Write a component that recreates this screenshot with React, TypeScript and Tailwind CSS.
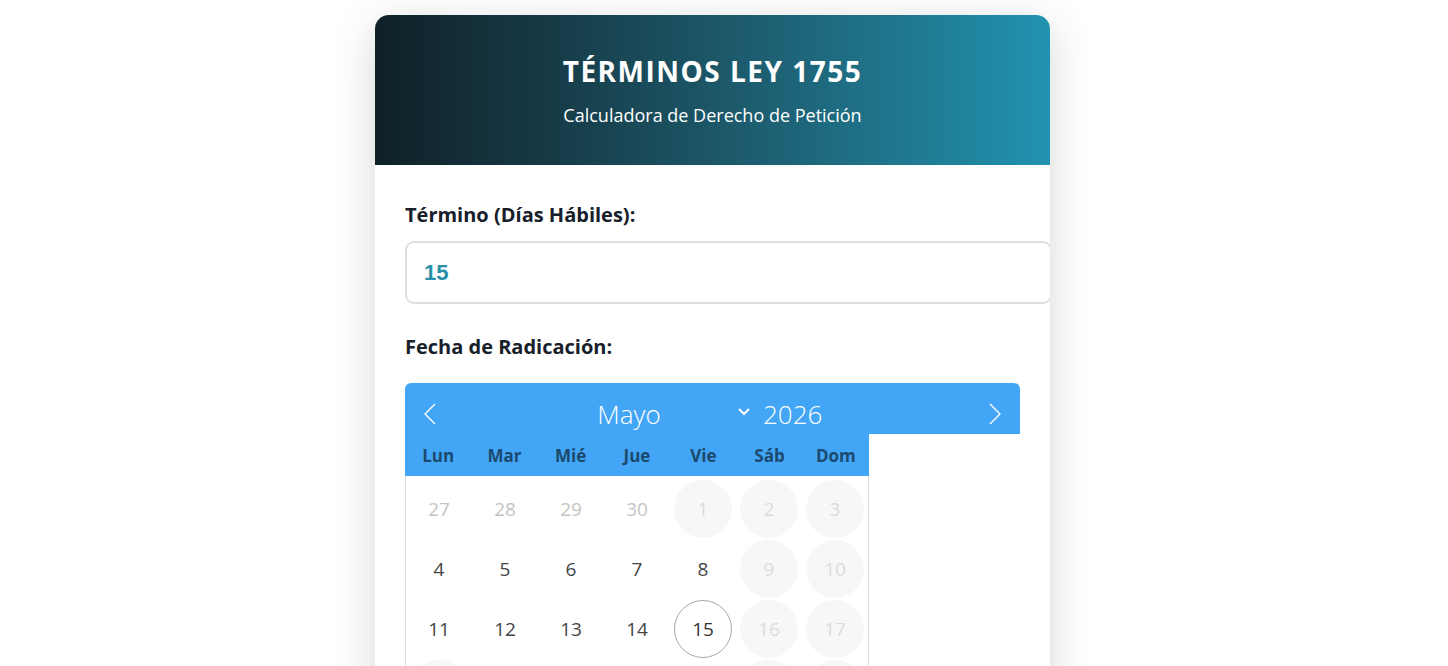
import { useState } from "react";

type Day = { n: number; outside?: boolean; off?: boolean };

const weekdays = ["Lun", "Mar", "Mié", "Jue", "Vie", "Sáb", "Dom"];

// festivos colombianos en mayo 2026
const holidays = [1, 18];

function buildMonth(): Day[][] {
  const days: Day[] = [27, 28, 29, 30].map((n) => ({ n, outside: true }));
  for (let n = 1; n <= 31; n++) {
    const col = days.length % 7;
    days.push({ n, off: col >= 5 || holidays.includes(n) });
  }
  const rows: Day[][] = [];
  for (let i = 0; i < days.length; i += 7) rows.push(days.slice(i, i + 7));
  return rows;
}

function Chevron({ dir }: { dir: "left" | "right" }) {
  return (
    <svg width="12" height="22" viewBox="0 0 12 22" fill="none">
      <polyline
        points={dir === "left" ? "11,1 1,11 11,21" : "1,1 11,11 1,21"}
        stroke="white"
        strokeWidth="1.4"
        strokeLinejoin="round"
      />
    </svg>
  );
}

export default function App() {
  const [term, setTerm] = useState("15");
  const [selected, setSelected] = useState(15);
  const rows = buildMonth();

  return (
    <div className="min-h-screen bg-white font-['Open_Sans','Noto_Sans',sans-serif]">
      <div className="w-[1425px] pt-[15px] flex justify-center">
        <div className="w-[675px] rounded-[14px] bg-white overflow-hidden shadow-[0_10px_45px_rgba(0,0,0,0.16)]">
          {/* Header */}
          <div className="h-[150px] bg-gradient-to-r from-[#0f2027] to-[#2193b0] flex flex-col items-center pt-[38px]">
            <h1 className="text-white font-bold text-[28px] leading-[36px] tracking-[1.5px]">
              TÉRMINOS LEY 1755
            </h1>
            <p className="text-white text-[18px] leading-[24px] mt-[14px]">
              Calculadora de Derecho de Petición
            </p>
          </div>

          <div className="px-[30px] pt-[35px] pb-[40px]">
            <label className="block text-[20px] leading-[30px] font-bold text-[#17202a]">
              Término (Días Hábiles):
            </label>
            <input
              value={term}
              onChange={(e) => setTerm(e.target.value)}
              className="mt-[11px] block w-[647px] h-[63px] border-2 border-[#dedede] rounded-[9px] px-[17px] text-[22px] font-bold text-[#2a8fa8] font-['Liberation_Sans',sans-serif] outline-none"
            />

            <label className="block mt-[28px] text-[20px] leading-[30px] font-bold text-[#17202a]">
              Fecha de Radicación:
            </label>

            {/* Calendar */}
            <div className="mt-[21px] w-[615px]">
              <div className="h-[51px] pt-[10px] bg-[#42a5f5] rounded-t-[6px] flex items-center text-white">
                <button className="w-[50px] h-full flex items-center justify-center">
                  <Chevron dir="left" />
                </button>
                <div className="ml-[74px] w-[200px] text-center text-[26px] font-light leading-[36px]">
                  Mayo
                </div>
                <svg width="14" height="10" viewBox="0 0 14 10" className="ml-[8px] mt-[-4px]" fill="none">
                  <polyline points="2,2 7,7 12,2" stroke="white" strokeWidth="2" />
                </svg>
                <div className="ml-[12px] text-[26px] font-light leading-[36px]">2026</div>
                <div className="flex-1" />
                <button className="w-[50px] h-full flex items-center justify-center">
                  <Chevron dir="right" />
                </button>
              </div>
              <div className="w-[464px]">
                <div className="h-[42px] pt-[2px] bg-[#42a5f5] grid grid-cols-7 items-center">
                  {weekdays.map((w) => (
                    <div key={w} className="text-center text-[17px] font-bold text-[#1b4a6e]">
                      {w}
                    </div>
                  ))}
                </div>
                <div className="border-x border-[#dddddd] pt-[3px] pb-[6px]">
                  {rows.map((row, i) => (
                    <div key={i} className="grid grid-cols-7 h-[60px]">
                      {row.map((d) => {
                        const isSel = !d.outside && d.n === selected;
                        let cls = "text-[#444444]";
                        if (d.outside) cls = "text-[#c4c4c4]";
                        else if (d.off) cls = "bg-[#f7f7f7] text-[#dcdcdc]";
                        if (isSel) cls = "text-[#333333] border border-[#a8a8a8]";
                        return (
                          <div key={`${i}-${d.n}`} className="flex items-center justify-center">
                            <button
                              onClick={() => !d.off && !d.outside && setSelected(d.n)}
                              className={`w-[58px] h-[58px] rounded-full flex items-center justify-center text-[19px] ${cls}`}
                            >
                              {d.n}
                            </button>
                          </div>
                        );
                      })}
                    </div>
                  ))}
                </div>
              </div>
            </div>
          </div>
        </div>
      </div>
    </div>
  );
}
